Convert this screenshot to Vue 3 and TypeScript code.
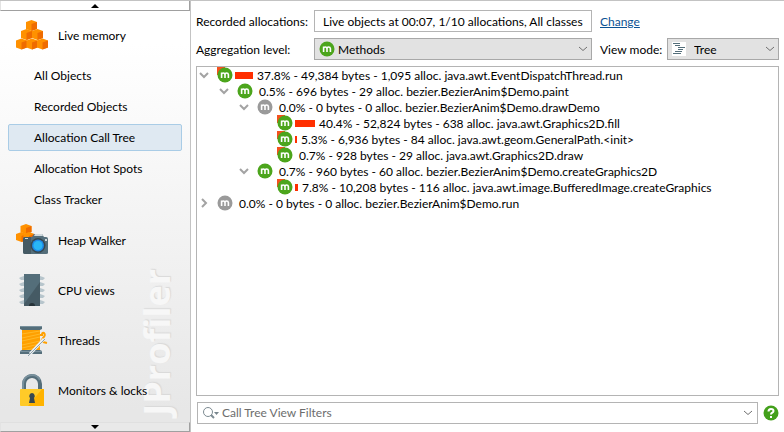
<script setup lang="ts">
import { ref } from 'vue'

interface CallNode {
  level: number
  percent: number
  text: string
  state: 'open' | 'closed' | 'leaf'
  muted?: boolean
  recorded?: boolean
}

const views = ['All Objects', 'Recorded Objects', 'Allocation Call Tree', 'Allocation Hot Spots', 'Class Tracker']
const activeView = ref('Allocation Call Tree')

// Top corner of every cube in the pyramid icon, back to front.
const cubes = [[15.5, 1], [10.5, 10], [21.500, 10], [5.5, 19.5], [16, 19.5], [26.5, 19.5]]
const heapCubes = [[10, 0], [5.5, 8], [13, 8]]

const nodes: CallNode[] = [
  { level: 0, percent: 37.8, text: '49,384 bytes - 1,095 alloc. java.awt.EventDispatchThread.run', state: 'open', recorded: true },
  { level: 1, percent: 0.5, text: '696 bytes - 29 alloc. bezier.BezierAnim$Demo.paint', state: 'open' },
  { level: 2, percent: 0, text: '0 bytes - 0 alloc. bezier.BezierAnim$Demo.drawDemo', state: 'open', muted: true },
  { level: 3, percent: 40.4, text: '52,824 bytes - 638 alloc. java.awt.Graphics2D.fill', state: 'leaf', recorded: true },
  { level: 3, percent: 5.3, text: '6,936 bytes - 84 alloc. java.awt.geom.GeneralPath.<init>', state: 'leaf', recorded: true },
  { level: 3, percent: 0.7, text: '928 bytes - 29 alloc. java.awt.Graphics2D.draw', state: 'leaf', recorded: true },
  { level: 2, percent: 0.7, text: '960 bytes - 60 alloc. bezier.BezierAnim$Demo.createGraphics2D', state: 'open' },
  { level: 3, percent: 7.8, text: '10,208 bytes - 116 alloc. java.awt.image.BufferedImage.createGraphics', state: 'leaf', recorded: true },
  { level: 0, percent: 0, text: '0 bytes - 0 alloc. bezier.BezierAnim$Demo.run', state: 'closed', muted: true },
]

const aggregation = ref('Methods')
const viewMode = ref('Tree')
const filter = ref('')
</script>

<template>
  <div class="app">
    <aside class="sidebar">
      <button class="scroller" aria-label="Scroll up">
        <svg width="8" height="4" viewBox="0 0 8 4"><path d="M4 0 8 4H0z" /></svg>
      </button>
      <nav class="nav">
        <span class="watermark" aria-hidden="true">JProfiler</span>
        <button class="section">
          <svg width="32" height="32" viewBox="0 0 32 32">
            <g v-for="([x, y], i) in cubes" :key="i" :transform="`translate(${x} ${y})`">
              <path fill="#ff9100" d="M0 0l5.5 2v7L0 11l-5.500-2V2z" />
              <path fill="#ef6c00" d="M0 4l5.500-2v7L0 11z" />
            </g>
          </svg>
          Live memory
        </button>
        <ul class="views">
          <li v-for="view in views" :key="view">
            <button class="view" :class="{ active: view === activeView }" @click="activeView = view">{{ view }}</button>
          </li>
        </ul>
        <button class="section">
          <svg width="32" height="32" viewBox="0 0 32 32">
            <g v-for="([x, y], i) in heapCubes" :key="i" :transform="`translate(${x} ${y})`">
              <path fill="#ff9100" d="M0 0l5.5 2v6L0 10l-5.500-2V2z" />
              <path fill="#ef6c00" d="M0 4l5.500-2v6L0 10z" />
            </g>
            <path fill="#546e7a" d="M7 15q0-2 2-2h7l2-3h8l2 3h2q2 0 2 2v14q0 1-2 1H9q-2 0-2-2z" />
            <path fill="#455a64" d="M7 15q0-2 2-2h6v17H9q-2 0-2-2z" />
            <path fill="#cfd8dc" d="M19 10h7l1 2h-9z" />
            <circle cx="22" cy="21.5" r="7.5" fill="#37474f" />
            <circle cx="22" cy="21.5" r="6" fill="#1e88e5" />
            <circle cx="22" cy="21.5" r="4.5" fill="#29b6f6" />
            <path fill="#cfd8dc" d="M29 15h2v2h-2zM9 14h3v1H9z" />
          </svg>
          Heap Walker
        </button>
        <button class="section">
          <svg width="32" height="32" viewBox="0 0 32 32">
            <g fill="#b7c5cc">
              <path d="M3 4l2-1 3-1v4H5zM3 10l2-1 3-1v4H5zM3 16l2-1 3-1v4H5zM3 22l2-1 3-1v4H5zM3 28l2-1 3-1v4H5z" />
              <path d="M29 4l-2-1-3-1v4h3zM29 10l-2-1-3-1v4h3zM29 16l-2-1-3-1v4h3zM29 22l-2-1-3-1v4h3zM29 28l-2-1-3-1v4h3z" />
            </g>
            <path fill="#546e7a" d="M8 0h16v32H8z" />
            <path fill="#455a64" d="M24 8v24H8v-2z" />
            <path fill="#263238" d="M13 32a3 3 0 0 1 6 0z" />
          </svg>
          CPU views
        </button>
        <button class="section">
          <svg width="32" height="32" viewBox="0 -2 32 32">
            <path fill="#ffa000" d="M6 4h18v22H6z" />
            <path fill="none" stroke="#ffb928" stroke-width="1" d="M6 8l18-3M6 12l18-4M6 15l18-4M6 19l18-4M6 22l18-4M6 25l18-4" />
            <path fill="#546e7a" d="M4 0h22v3l-2 1H6L4 3zM4 25l2-1h18l2 1v3H4z" />
            <path fill="#78909c" d="M4 0h22v1H4zM4 25h22v1H4z" />
            <path fill="none" stroke="#ffa000" stroke-width="2" d="M24 9h2q0-3 2-2 2 2-1 5-3 4 0 4l4 1" />
            <path fill="none" stroke="#eceff1" stroke-width="3" d="M14 28 28 13" />
            <path fill="none" stroke="#90a4ae" stroke-width="1" d="M12 30 29 13" />
          </svg>
          Threads
        </button>
        <button class="section">
          <svg width="32" height="32" viewBox="0 0 32 32">
            <path fill="none" stroke="#546e7a" stroke-width="4" d="M8 17v-7a8 8 0 0 1 16 0v7" />
            <path fill="none" stroke="#78909c" stroke-width="2" d="M7 17v-7a9 9 0 0 1 17-4" />
            <rect x="4" y="15" width="24" height="17" rx="1" fill="#ffca28" />
            <path fill="#ffb300" d="M12 32 26 15h2v17z" />
            <path fill="#37474f" d="M16 19a3 3 0 0 1 2 5l1 5h-6l1-5a3 3 0 0 1 2-5z" />
          </svg>
          Monitors &amp; locks
        </button>
      </nav>
      <button class="scroller bottom" aria-label="Scroll down">
        <svg width="8" height="4" viewBox="0 0 8 4"><path d="M4 4 8 0H0z" /></svg>
      </button>
    </aside>

    <main class="main">
      <div class="options">
        <label for="recorded">Recorded allocations:</label>
        <input id="recorded" class="field" type="text" readonly value="Live objects at 00:07, 1/10 allocations, All classes" />
        <div class="side"><a href="#">Change</a></div>

        <label for="aggregation">Aggregation level:</label>
        <div class="combo">
          <select id="aggregation" v-model="aggregation">
            <option>Methods</option>
            <option>Classes</option>
          </select>
          <svg class="lead" width="16" height="16" viewBox="0 0 16 16">
            <circle cx="8" cy="8" r="7.5" fill="#4ca51c" />
            <path fill="none" stroke="#fff" stroke-width="1.6" d="M4.6 11V5.6M4.6 7.6q0-1.6 1.6-1.6T8 7.6V11M8 7.6Q8 6 9.6 6t1.8 1.6V11" />
          </svg>
          <svg class="drop" width="10" height="6" viewBox="0 0 10 6"><path d="M1 1l4 3.5 4-3.5" /></svg>
        </div>
        <div class="side">
          <label for="mode">View mode:</label>
          <div class="combo">
            <select id="mode" v-model="viewMode">
              <option>Tree</option>
              <option>Flat</option>
            </select>
            <svg class="lead" width="14" height="14" viewBox="0 0 14 14">
              <path fill="#fff" d="M0 0h14v14H0z" />
              <path fill="none" stroke="#546e7a" d="M1 1.5h7M3 3.5h5M6 5.5h7M6 7.5h5M3 9.5h7M1 11.5h8" />
            </svg>
            <svg class="drop" width="10" height="6" viewBox="0 0 10 6"><path d="M1 1l4 3.5 4-3.5" /></svg>
          </div>
        </div>
      </div>

      <ul class="tree" role="tree" aria-label="Allocation call tree">
        <li v-for="(node, i) in nodes" :key="i" class="node" role="treeitem" :style="{ paddingLeft: node.level * 20 + 'px' }">
          <span class="toggle">
            <svg v-if="node.state === 'open'" width="10" height="8" viewBox="0 0 10 8"><path d="M1 2l4 4 4-4" /></svg>
            <svg v-else-if="node.state === 'closed'" width="8" height="10" viewBox="0 0 8 10"><path d="M2 1l4 4-4 4" /></svg>
          </span>
          <svg class="method" :class="{ muted: node.muted }" width="16" height="16" viewBox="0 0 16 16">
            <path v-if="node.recorded" fill="#f4511e" d="M0 0h8v8H0z" />
            <circle cx="8" cy="8" r="7.5" />
            <path fill="none" stroke="#fff" stroke-width="1.6" d="M4.6 11V5.6M4.6 7.6q0-1.6 1.6-1.6T8 7.6V11M8 7.6Q8 6 9.6 6t1.8 1.6V11" />
          </svg>
          <span class="bar" :style="{ width: Math.floor(node.percent / 2) + 'px' }"></span>
          <span class="caption">{{ node.percent.toFixed(1) }}% - {{ node.text }}</span>
        </li>
      </ul>

      <div class="footer">
        <div class="search">
          <svg class="glass" width="18" height="14" viewBox="0 0 18 14">
            <circle cx="6" cy="6" r="4.5" fill="none" stroke="#7d8b92" />
            <path fill="none" stroke="#7d8b92" stroke-width="2" d="M9 9l3 3" />
            <path fill="#78868d" d="M12 6h5l-2.5 3z" />
          </svg>
          <input v-model="filter" type="text" placeholder="Call Tree View Filters" aria-label="Call Tree View Filters" />
          <button class="history" aria-label="Filter history">
            <svg class="drop" width="10" height="6" viewBox="0 0 10 6"><path d="M1 1l4 3.5 4-3.5" /></svg>
          </button>
        </div>
        <button class="help" aria-label="Help">
          <svg width="16" height="16" viewBox="0 0 16 16">
            <circle cx="8" cy="8" r="7.5" fill="#43a01b" />
            <path fill="none" stroke="#fff" stroke-width="2" d="M5.5 6.5q0-2.5 2.5-2.5t2.5 2Q10.5 7 9 7.8q-1 .6-1 1.7" />
            <path fill="#fff" d="M7 11h2v2H7z" />
          </svg>
        </button>
      </div>
    </main>
  </div>
</template>

<style>
body {
  margin: 0;
  background: #fff;
}
</style>

<style scoped>
* {
  box-sizing: border-box;
}
.app {
  display: flex;
  min-height: 100vh;
  border-top: 1px solid #c3c3c3;
  font: 12px/16px Lato, sans-serif;
  color: #000;
}
svg {
  display: block;
  flex: none;
}
button,
input,
select {
  margin: 0;
  padding: 0;
  border: 0;
  border-radius: 0;
  background: none;
  font: inherit;
  color: inherit;
}
.sidebar {
  display: flex;
  flex: none;
  flex-direction: column;
  width: 191px;
  border-right: 1px solid #c3c3c3;
  background: linear-gradient(#fff 10%, #e7e7e7 95%);
}
.scroller {
  display: flex;
  align-items: center;
  justify-content: center;
  height: 10px;
  border-right: 1px solid #a0a0a0;
  border-bottom: 1px solid #a0a0a0;
  border-left: 1px solid #e3e3e3;
  background: #fff;
}
.scroller.bottom {
  border-top: 1px solid #e0e0e0;
  background: #e9e9e9;
}
.nav {
  position: relative;
  flex: 1;
}
.watermark {
  position: absolute;
  right: 8px;
  bottom: 6px;
  writing-mode: vertical-rl;
  transform: rotate(180deg);
  font-family: 'Open Sans', sans-serif;
  font-size: 36px;
  line-height: 50px;
  font-weight: 700;
  color: #f7f7f7;
  text-shadow: 1px 1px 1px #d9d9d9;
}
.section {
  position: relative;
  display: flex;
  align-items: center;
  gap: 10px;
  width: 100%;
  height: 50px;
  padding-left: 16px;
}
.section svg {
  margin-bottom: 2px;
}
.views {
  display: grid;
  gap: 4px;
  margin: 1px 0 3px;
  padding: 0 8px;
  list-style: none;
}
.view {
  width: 100%;
  height: 27px;
  padding-left: 25px;
  border: 1px solid transparent;
  border-radius: 2px;
  text-align: left;
}
.view.active {
  border-color: #a9cce6;
  background: #dfe9f2;
}
.main {
  display: flex;
  flex: 1;
  flex-direction: column;
  gap: 6px;
  min-width: 0;
  padding: 9px 5px 8px;
}
.options {
  display: grid;
  grid-template-columns: 110px 1fr 179px;
  align-items: center;
  gap: 6px 8px;
}
.options label,
.options a {
  padding-top: 2px;
  white-space: nowrap;
}
.field {
  width: 100%;
  height: 22px;
  padding: 1px 8px 0;
  border: 1px solid #b4b4b4;
  background: #fff;
}
.side {
  display: flex;
  align-items: center;
  gap: 4px;
}
.side .combo {
  flex: none;
  width: 112px;
  margin-left: auto;
}
a {
  color: #0b5394;
}
.combo {
  display: grid;
  align-items: center;
}
.combo > * {
  grid-area: 1 / 1;
}
.combo select {
  width: 100%;
  height: 22px;
  padding: 1px 0 0 23px;
  border: 1px solid #a8a8a8;
  background: #e2e2e2;
  appearance: none;
}
.side .combo select {
  padding-left: 26px;
}
.lead {
  margin-left: 5px;
  pointer-events: none;
}
.drop {
  justify-self: end;
  margin-right: 4px;
  fill: none;
  stroke: #707070;
  pointer-events: none;
}
.tree {
  flex: 1;
  margin: 0;
  padding: 0 1px 1px;
  border: 1px solid #b4b4b4;
  list-style: none;
}
.node {
  display: flex;
  align-items: center;
  height: 16px;
  white-space: nowrap;
}
.caption {
  padding-top: 2px;
}
.toggle {
  display: flex;
  align-items: center;
  justify-content: center;
  width: 12px;
  margin-right: 7px;
}
.toggle path {
  fill: none;
  stroke: #a3a3a3;
  stroke-width: 2;
}
.method {
  fill: #4ca51c;
}
.method.muted {
  fill: #9a9a9a;
}
.bar {
  height: 7px;
  margin: 0 4px 0 2px;
  background: #ff2f00;
}
.footer {
  display: flex;
  align-items: center;
  gap: 5px;
}
.search {
  display: flex;
  flex: 1;
  align-items: center;
  gap: 2px;
  height: 22px;
  margin-left: 1px;
  padding-left: 4px;
  border: 1px solid #b4b4b4;
}
.search input {
  flex: 1;
  min-width: 0;
  outline: 0;
}
.search input::placeholder {
  color: #6d6d6d;
  opacity: 1;
}
</style>
